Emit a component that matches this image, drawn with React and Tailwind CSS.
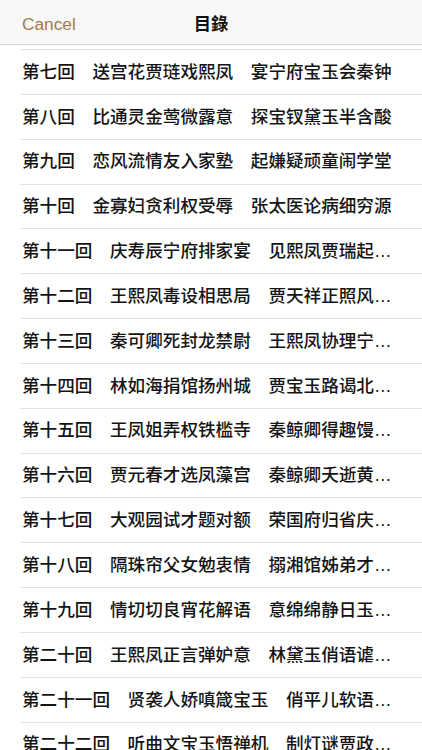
import React from "react";

const rows = [
  ["第七回", "送宫花贾琏戏熙凤", "宴宁府宝玉会秦钟"],
  ["第八回", "比通灵金莺微露意", "探宝钗黛玉半含酸"],
  ["第九回", "恋风流情友入家塾", "起嫌疑顽童闹学堂"],
  ["第十回", "金寡妇贪利权受辱", "张太医论病细穷源"],
  ["第十一回", "庆寿辰宁府排家宴", "见熙凤贾瑞起淫心"],
  ["第十二回", "王熙凤毒设相思局", "贾天祥正照风月鉴"],
  ["第十三回", "秦可卿死封龙禁尉", "王熙凤协理宁国府"],
  ["第十四回", "林如海捐馆扬州城", "贾宝玉路谒北静王"],
  ["第十五回", "王凤姐弄权铁槛寺", "秦鲸卿得趣馒头庵"],
  ["第十六回", "贾元春才选凤藻宫", "秦鲸卿夭逝黄泉路"],
  ["第十七回", "大观园试才题对额", "荣国府归省庆元宵"],
  ["第十八回", "隔珠帘父女勉衷情", "搦湘馆姊弟才题咏"],
  ["第十九回", "情切切良宵花解语", "意绵绵静日玉生香"],
  ["第二十回", "王熙凤正言弹妒意", "林黛玉俏语谑娇音"],
  ["第二十一回", "贤袭人娇嗔箴宝玉", "俏平儿软语救贾琏"],
  ["第二十二回", "听曲文宝玉悟禅机", "制灯谜贾政悲谶语"],
];

export default function App() {
  return (
    <div
      className="w-[422px] h-[750px] overflow-hidden bg-white"
      style={{ fontFamily: '"Liberation Sans", "Noto Sans CJK SC", sans-serif' }}
    >
      <div className="h-[45px] pt-[5px] grid grid-cols-[1fr_auto_1fr] items-center bg-[#f7f7f7] border-b border-[#d4d4d4]">
        <div className="pl-[22px] text-[17.3px] text-[#a27a4f]">Cancel</div>
        <div className="text-[17.3px] font-semibold text-[#111]">目錄</div>
        <div />
      </div>
      <div className="ml-[20px] h-[5px] border-b border-[#e2e2e2]" />
      {rows.map((r, i) => (
        <div key={i} className="ml-[20px] h-[44.85px] border-b border-[#e2e2e2] flex items-center pl-[2px] pr-[22px]">
          <span className="block truncate text-[17.6px] font-medium text-[#141414]">
            {r[0]}　{r[1]}　{r[2]}
          </span>
        </div>
      ))}
    </div>
  );
}
